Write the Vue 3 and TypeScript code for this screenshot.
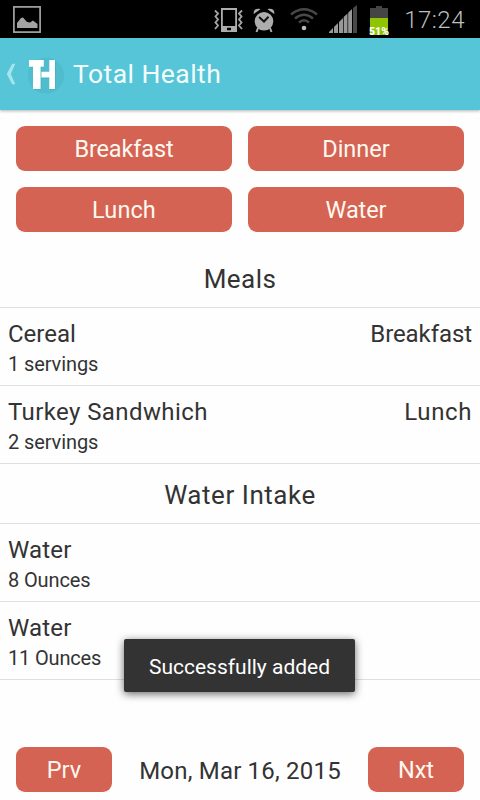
<script setup lang="ts">
interface Label {
  text: string
  tracking: number
}

interface Entry {
  name: Label
  amount: Label
  meal?: Label
}

interface Section {
  title: Label
  entries: Entry[]
}

const label = (text: string, tracking = 0): Label => ({ text, tracking })

const actions: Label[] = [
  label('Breakfast', -0.12),
  label('Dinner'),
  label('Lunch', 0.1),
  label('Water', -0.1),
]

const sections: Section[] = [
  {
    title: label('Meals', 0.45),
    entries: [
      { name: label('Cereal'), amount: label('1 servings', -0.1), meal: label('Breakfast', -0.08) },
      { name: label('Turkey Sandwhich', 0.4), amount: label('2 servings', -0.1), meal: label('Lunch', 0.6) },
    ],
  },
  {
    title: label('Water Intake', 0.55),
    entries: [
      { name: label('Water', 0.15), amount: label('8 Ounces', -0.12) },
      { name: label('Water', 0.15), amount: label('11 Ounces', -0.17) },
    ],
  },
]

const spacing = (item: Label) => ({ letterSpacing: `${item.tracking}px` })
</script>

<template>
  <div class="screen">
    <div class="status">
      <svg class="picture" width="28" height="27" viewBox="0 0 28 27">
        <rect x="0.9" y="0.9" width="26.2" height="25.2" fill="none" stroke="#a4a4a4" stroke-width="1.7" />
        <path d="M4 22V17L8 12L10 11.5L14 16L17 16.5L20 14.5L24.5 18V22Z" fill="#a4a4a4" />
      </svg>
      <svg class="vibrate" width="29" height="25" viewBox="0 0 29 25">
        <path fill-rule="evenodd" d="M7 0H23V24H7ZM8.8 2V18H21.2V2ZM13 19.8V22.2H17V19.8Z" fill="#adadad" />
        <path d="M1 2.5L4 5.5L1.5 8.5L4 11.5L1.5 14.5L4 17.5L1 21M28 2.5L25 5.5L27.5 8.5L25 11.5L27.5 14.5L25 17.5L28 21" fill="none" stroke="#a4a4a4" stroke-width="1.9" />
      </svg>
      <svg class="alarm" width="22" height="25" viewBox="0 0 22 25">
        <circle cx="11" cy="13.3" r="9.3" fill="#adadad" />
        <path d="M0.8 6C0 2 3 0 7.5 1.2ZM21.2 6C22 2 19 0 14.5 1.2Z" fill="#adadad" />
        <path d="M5 20L3.5 24M17 20L18.5 24" stroke="#adadad" stroke-width="2" />
        <path d="M6 9L11 13.5L15.5 8.8" fill="none" stroke="#111" stroke-width="2" />
      </svg>
      <svg class="wifi" width="28" height="23" viewBox="0 0 28 23">
        <g fill="none" stroke="#484848" stroke-width="2.4">
          <path d="M1 6.5Q14 -4 27 6.5" />
          <path d="M5 10.5Q14 3 23 10.5" />
          <path d="M9 14.5Q14 10 19 14.5" />
        </g>
        <circle cx="14" cy="20" r="2.3" fill="#bbb" />
      </svg>
      <svg class="signal" width="28" height="28" viewBox="0 0 28 28">
        <path d="M0 28V27L4 23V28ZM5 28V22L9 18V28ZM10 28V17L14 13V28ZM14.7 28V12L18.5 8.5V28ZM19.2 28V7.8L23 4V28Z" fill="#989898" />
        <path d="M24 28V3L28 0V28Z" fill="#484848" />
      </svg>
      <div class="battery">
        <svg width="18" height="29" viewBox="0 0 18 29">
          <path d="M0 2H6V0H12V2H18V12H0Z" fill="#454545" />
          <path d="M0 12H18V29H0Z" fill="#8fc400" />
        </svg>
        <span class="percent">51%</span>
      </div>
      <span class="clock">17:24</span>
    </div>

    <header class="bar">
      <svg class="back" width="10" height="22" viewBox="0 0 10 22">
        <path d="M6.2 0.8H9.3L4.8 11L9.3 21.2H6.2L0.8 11Z" fill="#a5e5ee" />
      </svg>
      <svg class="logo" width="38" height="40" viewBox="0 0 38 40">
        <circle cx="19" cy="21.5" r="18" fill="#4fbdce" />
        <path d="M3 7H17V13.5H14.5V18.5H22.8V7H28.8V35.8H22.8V24.5H14.5V35.8H7V13.5H3Z" fill="#329baa" opacity="0.35" />
        <path d="M2 6H16.8V12.7H13.6V35H6V12.7H2Z" fill="#fff" />
        <path d="M14.4 17.7H22.3V6H28V35H22.3V23.5H14.4Z" fill="#fff" />
      </svg>
      <h1 class="title">Total Health</h1>
    </header>

    <div class="actions">
      <button v-for="action in actions" :key="action.text" class="button" :style="spacing(action)">{{ action.text }}</button>
    </div>

    <section v-for="section in sections" :key="section.title.text">
      <h2 class="heading" :style="spacing(section.title)">{{ section.title.text }}</h2>
      <div v-for="(entry, index) in section.entries" :key="index" class="entry">
        <div class="line">
          <span class="name" :style="spacing(entry.name)">{{ entry.name.text }}</span>
          <span v-if="entry.meal" class="name" :style="spacing(entry.meal)">{{ entry.meal.text }}</span>
        </div>
        <div class="amount" :style="spacing(entry.amount)">{{ entry.amount.text }}</div>
      </div>
    </section>

    <footer class="footer">
      <button class="button small">Prv</button>
      <span class="date">Mon, Mar 16, 2015</span>
      <button class="button small">Nxt</button>
    </footer>

    <div class="toast">Successfully added</div>
  </div>
</template>

<style>
body {
  margin: 0;
  background: #fefefe;
}
</style>

<style scoped>
.screen {
  position: relative;
  display: flex;
  flex-direction: column;
  box-sizing: border-box;
  width: 480px;
  height: 800px;
  overflow: hidden;
  background: #fefefe;
  color: #333;
  font-family: Roboto, "Liberation Sans", sans-serif;
}
.status {
  display: flex;
  align-items: flex-start;
  box-sizing: border-box;
  height: 38px;
  padding: 0 15px 0 13px;
  background: #000;
}
.status svg {
  display: block;
  flex: none;
}
.picture { margin-top: 6px; }
.vibrate { margin: 8px 0 0 173px; }
.alarm { margin: 8px 0 0 10px; }
.wifi { margin: 8px 0 0 15px; }
.signal { margin: 5px 0 0 11px; }
.battery {
  position: relative;
  margin: 6px 0 0 13px;
}
.percent {
  position: absolute;
  left: -1px;
  top: 20px;
  color: #fff;
  font-size: 10.5px;
  line-height: 12px;
  font-weight: 900;
}
.clock {
  margin-left: auto;
  color: #bebebe;
  font-size: 24px;
  font-weight: 300;
  letter-spacing: 0.5px;
  line-height: 40px;
}
.bar {
  position: relative;
  display: flex;
  align-items: center;
  box-sizing: border-box;
  flex: none;
  height: 72px;
  padding-left: 6px;
  background: #55c5d7;
  box-shadow: 0 1px 3px rgba(0, 0, 0, 0.3);
}
.logo { margin-left: 11px; }
.title {
  margin: 0 0 0 8px;
  color: #f3fcfd;
  font-size: 26.5px;
  font-weight: 400;
  letter-spacing: 0.45px;
  line-height: 36px;
}
.actions {
  display: grid;
  grid-template-columns: 1fr 1fr;
  gap: 16px;
  padding: 16px;
}
.button {
  height: 45px;
  padding: 1px 0 0;
  border: 0;
  border-radius: 9px;
  background: #d46353;
  color: #fff8f0;
  font-family: inherit;
  font-size: 23.5px;
  line-height: 45px;
}
.heading {
  box-sizing: border-box;
  height: 60px;
  margin: 0;
  padding-top: 1px;
  border-bottom: 1px solid #dedede;
  font-size: 26px;
  font-weight: 400;
  line-height: 60px;
  text-align: center;
}
.entry {
  box-sizing: border-box;
  height: 78px;
  padding: 12px 8px 0;
  border-bottom: 1px solid #dedede;
}
.line {
  display: flex;
  justify-content: space-between;
}
.name {
  font-size: 24px;
  line-height: 28px;
}
.amount {
  margin-top: 4px;
  font-size: 20px;
  line-height: 24px;
}
.footer {
  display: flex;
  align-items: center;
  justify-content: space-between;
  margin-top: auto;
  padding: 0 16px 8px;
}
.small { width: 96px; }
.date {
  padding-top: 3px;
  font-size: 24px;
  letter-spacing: 0.2px;
  line-height: 42px;
}
.toast {
  position: absolute;
  left: 124px;
  top: 639px;
  width: 231px;
  height: 53px;
  border-radius: 2px;
  background: #333;
  box-shadow: 0 2px 9px rgba(0, 0, 0, 0.6);
  color: #fff;
  font-size: 21px;
  line-height: 57px;
  text-align: center;
}
</style>
